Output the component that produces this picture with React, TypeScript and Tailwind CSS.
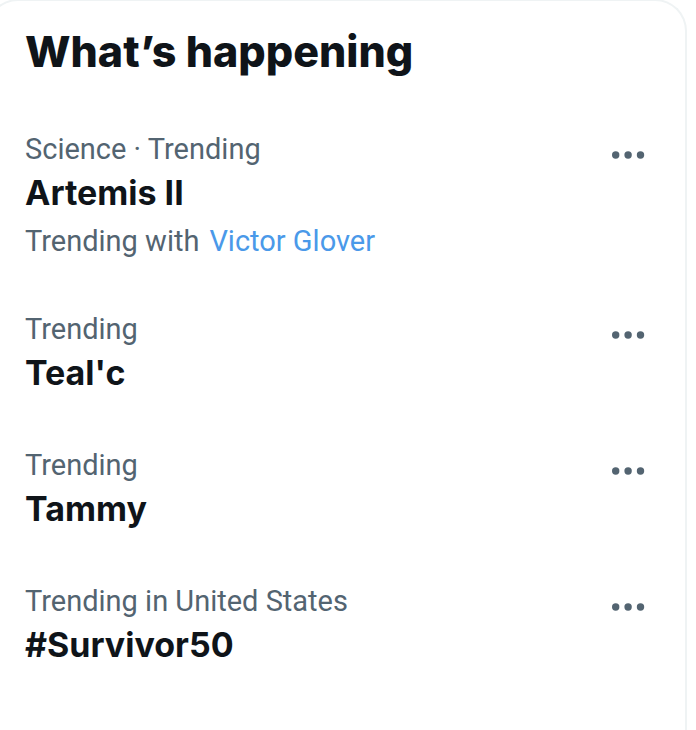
type Trend = {
    category: string
    name: string
    related?: string
}

const TRENDS: Trend[] = [
    { category: 'Science · Trending', name: 'Artemis II', related: 'Victor Glover' },
    { category: 'Trending', name: "Teal'c" },
    { category: 'Trending', name: 'Tammy' },
    { category: 'Trending in United States', name: '#Survivor50' },
]

const MoreIcon = () => (
    <svg viewBox="0 0 44 44" className="h-11 w-11" fill="currentColor" aria-hidden="true">
        <circle cx="9.7" cy="22" r="3.7" />
        <circle cx="22.1" cy="22" r="3.7" />
        <circle cx="34.5" cy="22" r="3.7" />
    </svg>
)

const TrendItem = ({ category, name, related }: Trend) => (
    <li className="flex items-start justify-between pt-6 pb-7">
        <div className="text-[29px] leading-8 text-[#536471]">
            <p>{category}</p>
            <h3 className="mt-1 font-['Inter',sans-serif] text-[34px] leading-12 font-bold text-[#0f1419]">{name}</h3>
            {related && (
                <p className="mt-2 mb-1 flex gap-2.5">
                    Trending with
                    <a href="#" className="text-[#4a99e9]">
                        {related}
                    </a>
                </p>
            )}
        </div>
        <button type="button" aria-label={`More options for ${name}`} className="text-[#536471]">
            <MoreIcon />
        </button>
    </li>
)

export default function App() {
    return (
        <div className="flex min-h-screen flex-col overflow-hidden bg-white font-['Roboto',sans-serif]">
            <section className="-mt-px mr-[9px] -ml-3.5 grow rounded-t-[32px] border-2 border-b-0 border-[#eff3f4] pt-6 pr-[35px] pl-[37px]">
                <h2 className="font-['Inter',sans-serif] text-[43px] leading-13 font-extrabold text-[#0f1419]">
                    What’s happening
                </h2>
                <ul className="mt-8">
                    {TRENDS.map((trend) => (
                        <TrendItem key={trend.name} {...trend} />
                    ))}
                </ul>
            </section>
        </div>
    )
}
